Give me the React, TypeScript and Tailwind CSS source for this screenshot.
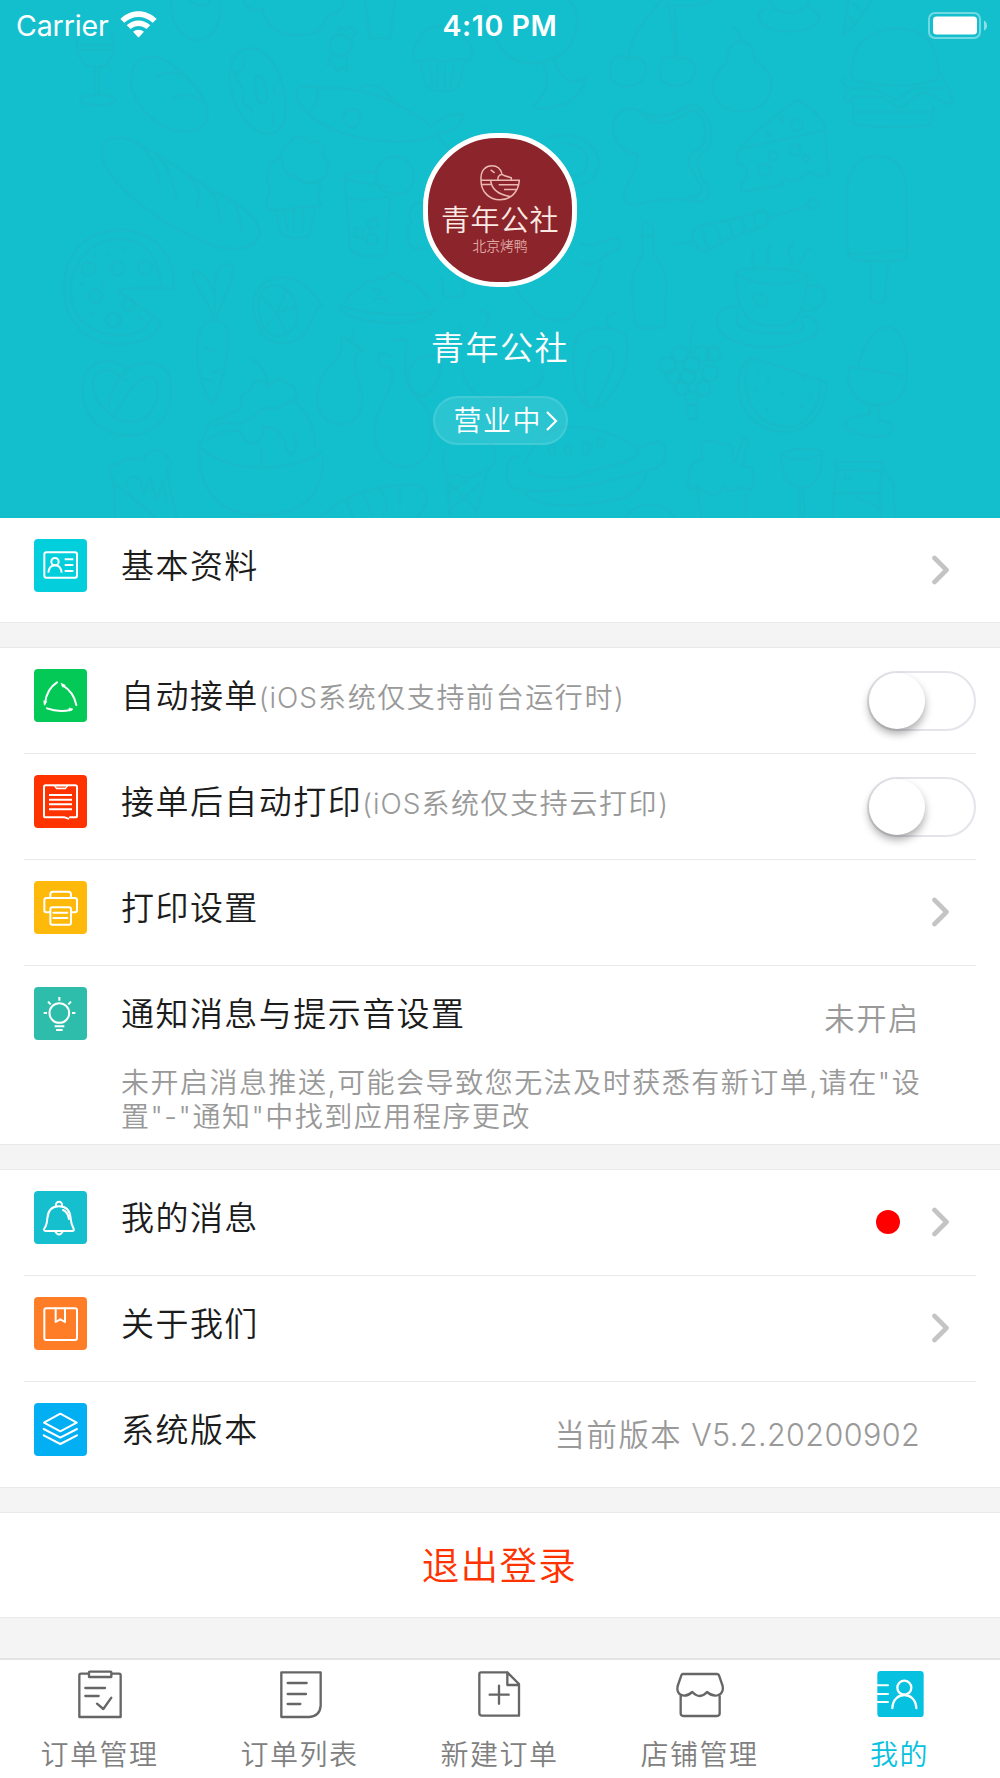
import type { ReactNode } from "react";

/* Faint food drawings behind the shop header */
function FoodPattern() {
  return (
    <svg
      className="absolute inset-0 h-full w-full"
      viewBox="0 0 3000 1554"
      preserveAspectRatio="none"
      fill="none"
      stroke="#1cb5c4"
      strokeOpacity="0.48"
      strokeWidth="8"
      strokeLinecap="round"
      strokeLinejoin="round"
    >
      {/* wine glass */}
      <path d="M232 105C222 160 245 202 287 202S350 160 336 100M232 135H336M240 150H330M285 204V285M297 204V285M240 300C240 280 345 280 345 300S240 322 240 300" />
      {/* bun */}
      <path d="M395 225C400 175 455 150 510 190C580 240 635 310 620 360C600 405 510 410 450 350C405 305 385 265 395 225ZM470 232C500 210 530 215 545 235M520 295C550 278 585 282 602 300" />
      {/* donut */}
      <path d="M690 210C700 145 760 125 805 170C850 220 875 340 840 385C810 420 750 395 715 330C695 290 685 250 690 210ZM765 245C765 220 790 225 797 255C805 290 800 315 785 310C765 300 765 270 765 245ZM738 165C725 185 740 205 715 215C690 240 740 250 730 290C720 330 760 310 755 340M820 345V375M818 260L825 280M700 215L705 230" />
      {/* top edge fragments */}
      <path d="M515 0C505 60 545 120 590 120S670 70 660 0M570 0C590 25 625 20 630 0M730 0C740 30 770 35 785 25C800 80 830 105 890 105S965 95 980 50C1020 40 1030 20 1030 0M1095 0L1110 115H1170L1185 0M1455 20C1470 90 1500 190 1590 190C1680 190 1740 130 1730 50C1725 20 1715 0 1700 0M1630 190C1650 240 1645 280 1600 315C1600 335 1640 325 1700 310C1735 285 1755 260 1755 235C1710 260 1680 230 1665 190" />
      {/* candy */}
      <path d="M990 135C990 105 1020 95 1045 115S1050 165 1020 168S990 155 990 135ZM1015 100L1020 80L1035 92L1050 78L1070 98L1052 115M1000 160L980 195L1000 192L1012 212L1028 202L1042 212L1040 165" />
      {/* cupcake */}
      <path d="M1242 172C1230 140 1260 130 1262 105C1285 70 1360 70 1385 105C1410 125 1425 150 1410 175M1245 180C1270 195 1290 170 1310 182C1335 195 1360 170 1408 180M1262 190L1275 255C1300 280 1360 275 1375 262L1392 190M1290 200L1298 255M1312 200V260M1335 200V262M1360 200L1352 258" />
      {/* fish */}
      <path d="M890 290C885 260 910 255 950 262C1080 262 1160 280 1295 378C1320 350 1360 340 1390 342C1385 380 1360 395 1310 400C1325 425 1340 440 1350 450M890 290C920 370 1050 425 1200 425C1250 425 1270 418 1300 408M950 264C960 290 945 320 932 330M1085 262C1110 245 1150 260 1180 300M1030 350C1040 320 1085 325 1082 340C1080 370 1065 390 1050 382C1035 370 1025 360 1030 350Z" />
      {/* baguette */}
      <path d="M305 450C310 405 370 400 430 440C500 475 600 550 640 575C700 600 780 650 780 700C770 750 690 765 600 720C480 670 300 540 305 450ZM425 440C460 470 465 500 480 545M475 470C510 500 520 560 530 600M565 530C600 560 600 590 590 625M625 570C660 600 650 630 662 665M700 605C720 630 715 660 725 690" />
      {/* ice cream cup */}
      <path d="M800 620C790 590 825 580 802 545C795 500 820 475 845 475C840 440 870 435 880 415C910 400 920 420 930 430C960 415 980 440 970 470C995 490 985 530 960 540C940 555 900 550 890 530C855 530 845 500 848 480M955 545C975 570 940 590 965 610C940 635 900 610 880 625C850 630 820 640 800 620M828 630L840 695C860 720 920 720 930 700L945 625M855 630L862 690M882 630V690M910 625V688" />
      {/* soft drink */}
      <path d="M1035 535C1060 550 1130 550 1160 560M1035 535C1040 515 1080 515 1130 515M1035 540L1050 745C1070 775 1150 775 1158 755L1170 600M1045 590C1080 605 1130 600 1165 590M1130 540C1120 500 1150 470 1185 470S1245 500 1240 540S1205 585 1175 580S1130 560 1130 540ZM1100 665L1130 655L1135 680L1110 690ZM1065 685L1090 690L1088 715L1065 710Z" />
      <circle cx="1115" cy="718" r="17" />
      {/* pizza */}
      <path d="M520 865C530 770 465 690 360 690S190 765 192 870S270 1035 360 1033S480 985 480 965L358 875C355 860 380 868 405 866L485 862C475 760 430 717 355 717S212 785 212 870S270 1000 345 1005S440 980 455 958M485 865H522" />
      <circle cx="265" cy="806" r="20" /><circle cx="353" cy="806" r="20" /><circle cx="435" cy="803" r="20" />
      <circle cx="287" cy="888" r="20" /><circle cx="340" cy="960" r="22" /><circle cx="385" cy="915" r="18" />
      <path d="M285 765V770M325 770L320 760M370 740V750M240 850L250 855M305 850L312 862M270 935L278 942M420 950L428 960" />
      {/* carrot */}
      <path d="M640 960C590 970 590 1020 592 1080C600 1140 615 1190 640 1210C660 1180 680 1080 685 1030C690 980 670 960 640 960ZM640 955C630 900 570 850 580 815C600 810 625 840 645 880M650 955C660 900 705 850 700 800C680 780 650 800 645 850V945M610 1040L640 1055M660 1110L635 1120M610 1135L640 1145" />
      {/* lemon */}
      <path d="M760 915C765 850 810 825 870 835C920 845 935 880 965 912C940 930 935 970 915 1000C880 1040 800 1040 780 990C765 960 760 940 760 915ZM775 920C775 860 810 850 840 860C880 870 895 920 890 960C880 1010 810 1030 785 975Z" />
      <path d="M830 940L785 890M830 940L860 870M830 940L880 920M830 940L860 1000M830 940L795 980" />
      {/* cake on a plate */}
      <path d="M1020 915C1010 940 1080 965 1160 968S1300 955 1305 925C1290 950 1100 950 1020 915ZM1038 905C1040 880 1080 870 1100 845C1120 850 1130 830 1155 835C1180 805 1200 830 1220 845C1250 840 1260 880 1290 895M1115 870C1130 860 1150 875 1135 885M1120 905C1140 880 1165 900 1160 912" />
      {/* pretzel */}
      <path d="M250 1190C235 1110 290 1080 330 1082C360 1090 375 1105 385 1105C420 1080 490 1080 508 1130C530 1230 480 1305 380 1307C300 1300 255 1250 250 1190ZM300 1210C260 1160 280 1110 320 1110C345 1110 360 1135 380 1140M325 1215C330 1170 375 1105 400 1100M345 1245C380 1180 420 1120 460 1130C490 1160 470 1260 400 1265C350 1270 320 1240 300 1210" />
      {/* eggplant, vase */}
      <path d="M1025 1010C1030 1060 1010 1080 980 1110C940 1160 940 1250 1000 1270C1060 1285 1095 1240 1085 1180C1075 1130 1055 1110 1070 1060C1090 1050 1100 1050 1095 1050C1060 1045 1050 1020 1060 995M1025 1010L1075 1040M1175 1025C1180 1015 1215 1015 1220 1025L1215 1090C1210 1140 1230 1180 1270 1215C1310 1260 1310 1400 1215 1400C1130 1400 1110 1300 1130 1250C1150 1200 1185 1150 1175 1105C1130 1100 1130 1080 1140 1055L1175 1070M1225 1120C1230 1080 1280 1060 1320 1070C1330 1130 1300 1180 1265 1190C1235 1180 1225 1150 1225 1120Z" />
      {/* sundae */}
      <path d="M598 1330C590 1450 640 1545 780 1545S970 1470 970 1375M605 1345C680 1420 880 1420 965 1355M600 1330C620 1310 610 1270 650 1260C680 1240 720 1240 725 1210C710 1180 760 1175 760 1150C780 1130 800 1150 805 1160C830 1125 850 1140 860 1150C900 1160 890 1190 880 1200C930 1240 945 1290 945 1340M805 1155C800 1120 780 1090 755 1078M650 1275C690 1250 700 1290 740 1260C780 1250 770 1220 810 1225C840 1230 850 1210 880 1200M620 1320C680 1280 690 1300 720 1290C740 1350 790 1340 790 1280C830 1280 850 1300 860 1350C880 1385 900 1340 880 1300M785 1345V1400" />
      {/* popcorn */}
      <path d="M345 1554L340 1440C320 1420 325 1390 360 1390C370 1370 400 1375 430 1380C440 1345 490 1340 500 1370C530 1390 500 1410 500 1415L530 1554M345 1450L470 1554M380 1460C380 1430 400 1420 420 1440L430 1480L450 1435L470 1500L490 1440L500 1510" />
      {/* bread roll and cone */}
      <path d="M960 1554C1030 1480 1150 1450 1250 1455C1300 1470 1280 1520 1250 1554M1040 1500L1060 1554M1090 1480L1115 1545M1140 1467C1165 1500 1165 1520 1150 1545M1200 1460V1520M1335 1350C1320 1400 1340 1450 1370 1425C1400 1445 1430 1425 1450 1415C1500 1400 1490 1350 1470 1330M1342 1440L1350 1554M1460 1420L1425 1554M1345 1480L1400 1440M1350 1530L1440 1450M1350 1450L1430 1530" />
      {/* small pieces round the avatar */}
      <path d="M1270 610C1230 600 1220 650 1235 665C1210 700 1220 760 1270 745M1325 830L1330 885C1340 895 1385 890 1392 885V850M1440 930C1480 940 1460 970 1455 980M1380 980C1375 1000 1400 1005 1405 1010M1385 1110C1400 1180 1460 1220 1520 1190C1600 1180 1640 1140 1625 1110" />
      <path d="M1650 410C1740 390 1800 440 1795 500C1785 550 1740 560 1720 555M1690 430C1750 430 1775 470 1755 510C1745 530 1720 530 1715 525M1740 730C1780 750 1820 710 1850 715C1870 730 1860 750 1820 760C1800 790 1770 800 1745 790M1800 800C1800 850 1740 920 1720 950C1680 970 1610 960 1600 930L1545 865" />
      {/* cherries */}
      <path d="M1830 200C1835 160 1870 165 1885 180C1905 160 1945 180 1938 220C1925 265 1850 275 1832 230ZM1980 205C1985 160 2020 165 2035 180C2055 165 2090 185 2085 220C2070 265 2000 270 1982 235ZM1885 170C1890 110 1940 50 1985 0M2030 172C2025 110 2010 50 2005 10M2025 172C2035 110 2025 30 2018 15C2060 20 2100 20 2135 0" />
      {/* pear */}
      <path d="M2220 125C2190 125 2182 160 2180 190C2145 215 2130 260 2145 290C2170 350 2270 345 2300 300C2335 240 2300 200 2265 185C2260 160 2265 125 2220 125ZM2222 122C2220 100 2210 90 2200 83" />
      {/* saucer, cone tip */}
      <path d="M2310 5C2320 50 2420 50 2425 0M2300 25C2260 30 2265 90 2365 95C2470 90 2480 40 2425 22M2545 0L2530 105C2570 70 2600 30 2615 0M2540 40L2560 70M2560 10L2590 40" />
      {/* burger */}
      <path d="M2555 230C2550 150 2590 90 2690 85C2790 85 2820 160 2815 235M2555 235C2620 265 2760 265 2815 235M2530 235C2520 260 2560 260 2540 280C2520 300 2540 320 2560 290L2640 290L2700 325L2760 280C2800 270 2830 320 2855 310C2860 290 2840 290 2855 275C2830 260 2850 250 2820 225M2560 310V370C2580 385 2770 380 2790 375L2802 320M2570 335H2790M2545 265H2620L2690 300L2740 265H2830" />
      {/* toast */}
      <path d="M1840 400C1830 340 1880 310 1925 335C1970 365 2030 340 2070 315C2130 320 2150 410 2120 450C2090 470 2080 480 2110 540C2140 570 2130 610 2090 605C2020 590 1960 600 1900 615C1860 610 1870 570 1890 540C1900 510 1920 490 1910 460C1870 460 1850 430 1840 400ZM1925 345C1985 390 2030 360 2075 330C2120 340 2125 400 2105 440C2050 470 2060 490 2095 545C2120 580 2090 595 2065 590" />
      {/* cheese */}
      <path d="M2210 460C2250 400 2350 330 2390 300C2440 320 2480 370 2475 395L2485 520C2470 540 2440 520 2435 515C2400 520 2410 550 2365 540C2350 530 2340 545 2350 555L2225 575L2222 550C2250 540 2250 500 2215 490ZM2225 445L2475 390" />
      <circle cx="2390" cy="375" r="18" /><circle cx="2385" cy="450" r="16" /><circle cx="2320" cy="467" r="13" /><circle cx="2293" cy="510" r="18" /><circle cx="2418" cy="475" r="10" /><circle cx="2345" cy="360" r="7" /><circle cx="2305" cy="403" r="7" />
      {/* skewer */}
      <path d="M2025 732C2060 725 2060 730 2080 725M2080 690C2110 660 2160 680 2290 630C2310 640 2305 670 2295 675C2240 700 2200 700 2120 755C2090 750 2070 720 2080 690ZM2105 685C2120 700 2105 720 2125 745M2140 675C2160 690 2150 710 2165 730M2180 665C2200 680 2190 700 2205 715M2220 655C2235 670 2235 690 2235 695M2260 645L2270 680M2305 655C2340 640 2390 630 2425 615" />
      <circle cx="2440" cy="612" r="15" />
      {/* popsicle */}
      <path d="M2542 740V560C2550 490 2590 468 2632 468S2710 490 2718 560L2722 770C2715 790 2560 790 2550 770ZM2550 760C2600 770 2680 750 2720 750M2613 785V895C2620 915 2650 915 2655 900L2663 785" />
      {/* bottle */}
      <path d="M1925 690C1925 660 1960 665 1960 690V755C1970 790 2000 800 1998 850L1995 975C1970 990 1920 990 1905 975L1895 850C1895 800 1925 790 1928 755ZM1928 708H1960" />
      {/* coffee */}
      <path d="M2210 815C2205 880 2220 930 2250 960C2290 985 2350 985 2385 960C2410 930 2420 880 2422 825M2210 815C2230 800 2390 800 2422 825C2400 860 2240 865 2210 815ZM2420 865C2440 845 2480 860 2472 895C2460 930 2430 935 2410 930M2215 920C2160 915 2140 950 2155 985C2200 1050 2340 1060 2440 1010C2470 980 2450 950 2410 950M2215 940C2190 990 2260 1000 2330 1000S2420 990 2405 965" />
      <path d="M2260 895C2260 870 2300 880 2302 905C2300 925 2265 920 2260 895ZM2255 755C2265 770 2250 780 2262 795M2310 735C2290 760 2315 770 2303 795M2380 728C2345 760 2385 770 2372 795M2430 745C2400 760 2415 780 2400 790" />
      {/* chilli */}
      <path d="M1830 985C1810 970 1820 940 1855 935M1740 1000C1780 975 1860 980 1880 1010C1890 1080 1870 1150 1810 1210C1780 1240 1740 1220 1725 1150C1715 1080 1720 1020 1740 1000ZM1765 1225C1745 1170 1750 1080 1790 1045C1840 1020 1850 1080 1835 1110C1820 1150 1790 1200 1785 1225" />
      {/* grapes */}
      <path d="M2073 1060V1015C2075 990 2080 970 2085 962M2062 1220V1250C2070 1260 2090 1260 2090 1250V1220" />
      <circle cx="2003" cy="1096" r="24" /><circle cx="2040" cy="1062" r="24" /><circle cx="2105" cy="1062" r="24" /><circle cx="2140" cy="1062" r="22" /><circle cx="2075" cy="1096" r="24" /><circle cx="2020" cy="1130" r="22" /><circle cx="2063" cy="1130" r="22" /><circle cx="2130" cy="1120" r="24" /><circle cx="2045" cy="1165" r="20" /><circle cx="2110" cy="1165" r="22" /><circle cx="2075" cy="1195" r="20" />
      {/* melon */}
      <path d="M2260 1075L2478 1145C2485 1200 2450 1290 2360 1295C2270 1300 2200 1220 2218 1130C2225 1095 2240 1075 2260 1075ZM2245 1080C2220 1150 2240 1280 2365 1280C2430 1280 2465 1200 2460 1150" />
      <path d="M2275 1115V1122M2303 1140L2306 1148M2268 1165L2265 1175M2345 1180H2350M2410 1125L2412 1135M2400 1210L2408 1222M2298 1222L2302 1230M2435 1185L2430 1195" />
      {/* egg cup */}
      <path d="M2575 1095C2590 1030 2630 980 2665 980C2710 990 2725 1050 2720 1130L2550 1100C2530 1160 2570 1210 2620 1215C2690 1220 2720 1180 2720 1130M2610 1215V1240C2590 1255 2540 1240 2535 1275C2550 1305 2630 1315 2660 1308C2690 1290 2680 1265 2640 1262L2632 1215" />
      {/* pie */}
      <path d="M1575 1390C1600 1320 1660 1280 1710 1280C1800 1285 1880 1310 1915 1355C1890 1400 1820 1390 1740 1425C1690 1445 1590 1430 1585 1410M1560 1370C1520 1360 1510 1420 1530 1460C1580 1485 1700 1470 1800 1450C1860 1430 1920 1420 1940 1410C2000 1410 2010 1340 1980 1325C1940 1330 1940 1335 1915 1345M1575 1480C1620 1530 1750 1520 1840 1500C1910 1490 1930 1450 1940 1415" />
      <ellipse cx="1657" cy="1350" rx="10" ry="18" /><ellipse cx="1705" cy="1350" rx="10" ry="18" /><ellipse cx="1758" cy="1345" rx="12" ry="18" /><ellipse cx="1802" cy="1328" rx="9" ry="15" /><path d="M1875 1554C1910 1500 1990 1500 2025 1554" />
      {/* shake, glass, carton */}
      <path d="M2105 1554L2090 1460C2060 1480 2060 1450 2070 1420C2060 1390 2100 1380 2110 1375C2095 1330 2110 1320 2130 1325C2150 1310 2150 1340 2180 1330C2210 1340 2190 1370 2205 1385L2230 1315L2245 1320L2225 1400C2260 1390 2265 1420 2260 1450C2265 1475 2240 1470 2235 1465C2210 1450 2200 1490 2170 1460C2150 1500 2120 1480 2095 1465M2238 1480V1554M2345 1365C2340 1430 2370 1460 2405 1462S2470 1430 2465 1355C2450 1345 2360 1340 2345 1365C2380 1385 2440 1380 2465 1360M2400 1465V1554M2412 1465V1554M2505 1385H2650V1410M2505 1385L2510 1410L2650 1412L2680 1450L2685 1554M2510 1412L2500 1490V1554M2505 1480H2640L2645 1554M2645 1415L2640 1480M2570 1490C2600 1520 2620 1500 2640 1530M2535 1425C2530 1450 2555 1440 2550 1430" />
    </svg>
  );
}

function MenuIcon({ bg, children }: { bg: string; children: ReactNode }) {
  return (
    <span className={`flex h-[53px] w-[53px] shrink-0 rounded-[4px] ${bg}`}>
      <svg
        className="h-full w-full"
        viewBox="0 0 159 159"
        fill="none"
        stroke="white"
        strokeWidth="6"
        strokeLinecap="round"
        strokeLinejoin="round"
      >
        {children}
      </svg>
    </span>
  );
}

function Chevron() {
  return (
    <svg
      className="mr-[26px] mb-[1px] h-[30px] w-[19px]"
      viewBox="0 0 19 30"
      fill="none"
      stroke="#c4c4c7"
      strokeWidth="4.6"
      strokeLinecap="round"
      strokeLinejoin="round"
    >
      <path d="M3.5 3L15.5 15L3.5 27" />
    </svg>
  );
}

function Toggle() {
  return (
    <span className="flex h-[60px] w-[109px] rounded-full border-2 border-[#e4e4ea] bg-white">
      <span className="h-14 w-14 rounded-full bg-white shadow-[0_5px_9px_rgba(0,0,0,0.33)]" />
    </span>
  );
}

type RowProps = {
  icon: ReactNode;
  title: string;
  hint?: ReactNode;
  note?: ReactNode;
  right?: ReactNode;
  size?: string;
  line?: boolean;
};

function Row({ icon, title, hint, note, right, size = "h-[106px]", line = true }: RowProps) {
  return (
    <div
      className={`mx-6 flex flex-col ${size} ${line ? "border-b border-[#e9e9e9]" : ""}`}
    >
      <div className="flex h-[105px] shrink-0 justify-between">
        <div className="mt-[21px] flex h-[53px] items-center pl-[10px]">
          {icon}
          <span className="ml-[34px] pt-[1px] text-[33px] leading-[50px] tracking-[1.45px] whitespace-nowrap text-[#1c1c1c]">
            {title}
          </span>
          {hint && (
            <span className="pt-[5px] text-[28px] leading-[48px] tracking-[1.6px] whitespace-nowrap text-[#999]">
              {hint}
            </span>
          )}
        </div>
        <div className="flex items-center">{right}</div>
      </div>
      {note}
    </div>
  );
}

function Gap() {
  return <div className="h-[26px] shrink-0 border-y border-[#e9e9e9] bg-[#f4f4f4]" />;
}

function Tab({ label, active, children }: { label: string; active?: boolean; children: ReactNode }) {
  return (
    <div className="flex w-[200px] flex-col items-center pt-[10px]">
      <svg
        className="h-[50px] w-[60px]"
        viewBox="0 0 180 150"
        fill="none"
        stroke="#666"
        strokeWidth="7"
        strokeLinecap="round"
        strokeLinejoin="round"
      >
        {children}
      </svg>
      <span
        className={`mt-[15px] pr-[1px] text-[28px] leading-[40px] tracking-[1.5px] ${
          active ? "text-[#06c1df]" : "text-[#808080]"
        }`}
      >
        {label}
      </span>
    </div>
  );
}

export default function App() {
  return (
    <div className="flex h-[1778px] w-[1000px] flex-col overflow-hidden bg-white font-[350] [font-family:Inter,'Noto_Sans_CJK_SC_DemiLight','Noto_Sans_CJK_SC',sans-serif]">
      <header className="relative h-[518px] shrink-0 overflow-hidden bg-[#14bfcd] text-white">
        <FoodPattern />
        <div className="relative flex flex-col items-center">
          <div className="grid h-[51px] w-full grid-cols-3 items-center pr-[13px] pl-4">
            <div className="flex items-center gap-[11px] pt-[1px] text-[28.5px] font-normal tracking-[-0.1px]">
              Carrier
              <svg className="mb-1 h-[27px] w-[37px]" viewBox="0 0 111 81" fill="white">
                <path d="M1 24C32-7 79-7 110 24L98 35C73 12 38 12 13 35Z" />
                <path d="M20 43C41 24 70 24 91 43L79 54C65 42 46 42 32 54Z" />
                <path d="M39 62C49 54 62 54 72 62L58 77Q55.500 80 53 77Z" />
              </svg>
            </div>
            <div className="pt-[1px] pr-[3px] text-center text-[28.500px] font-semibold tracking-[0.600px]">4:10 PM</div>
            <svg className="h-[28px] w-[60px] justify-self-end" viewBox="0 0 60 28">
              <rect x="2" y="1" width="51" height="25" rx="6" fill="none" stroke="white" strokeOpacity="0.4" strokeWidth="2" />
              <rect x="6" y="4.500" width="44" height="18" rx="3.500" fill="white" />
              <path d="M57 8.500Q60 10 60 13.500T57 18.500Z" fill="white" fillOpacity="0.5" />
            </svg>
          </div>

          <div className="mt-[82px] flex h-[154px] w-[154px] flex-col items-center rounded-[74px] border-[5px] border-white bg-[#8c242b] pt-[27px]">
            <svg
              className="h-9 w-10"
              viewBox="0 0 120 107"
              fill="none"
              stroke="#eab9b2"
              strokeWidth="4.500"
              strokeLinejoin="round"
            >
              <path d="M3 45V36C4 14 18 2 36 2C52 2 62 12 66 26M2 45H118C116 80 92 104 60 104S3 80 3 45M54 44C52 30 64 24 72 31L94 38V44M32 14L44 23M3 58H32M32 45C34 70 54 88 90 94M56 59H114M72 73H108" />
            </svg>
            <span className="mt-[3px] text-[29px] leading-[34px] tracking-[0.500px] whitespace-nowrap text-[#fbe9e3]">
              青年公社
            </span>
            <span className="-mt-[2px] text-[13.800px] leading-5 whitespace-nowrap text-[#e0aaa6]">北京烤鸭</span>
          </div>

          <div className="mt-[37px] text-[33px] leading-[48px] tracking-[1.450px]">青年公社</div>

          <div className="mt-[24px] flex h-[49px] w-[135px] items-center rounded-full border-2 border-white/10 bg-white/10 pl-[19px]">
            <span className="text-[28px] leading-10 tracking-[1.500px] whitespace-nowrap">营业中</span>
            <svg className="ml-[4px] h-5 w-3 shrink-0" viewBox="0 0 12 20" fill="none" stroke="white" strokeWidth="2.200">
              <path d="M1 1L10 10L1 19" />
            </svg>
          </div>
        </div>
      </header>

      <Row
        size="h-[104px]"
        line={false}
        title="基本资料"
        right={<Chevron />}
        icon={
          <MenuIcon bg="bg-[#03cfdc]">
            <rect x="31" y="40" width="98" height="76" rx="6" />
            <circle cx="63" cy="68" r="11" />
            <path d="M43 101C45 85 52 79 63 79S81 85 83 101M92 61H118M92 78H118M92 96H118" strokeLinecap="butt" />
          </MenuIcon>
        }
      />
      <Gap />
      <Row
        title="自动接单"
        hint={<><span className="tracking-[1px]">(iOS</span>系统仅支持前台运行时)</>}
        right={<Toggle />}
        icon={
          <MenuIcon bg="bg-[#04c957]">
            <path d="M69 40C50 52 36 76 33 103M86 49C108 62 122 82 127 108M39 118Q74 131 112 122" />
            <path d="M30 96L38 98L32 108ZM82 43L94 49L87 54ZM116 120L105 117L106 125Z" fill="white" strokeWidth="2" />
          </MenuIcon>
        }
      />
      <Row
        title="接单后自动打印"
        hint={<><span className="tracking-[1px]">(iOS</span>系统仅支持云打印)</>}
        right={<Toggle />}
        icon={
          <MenuIcon bg="bg-[#ff3300]">
            <path d="M108 127H124Q129 127 129 122V36Q129 31 124 31H35Q30 31 30 36V122Q30 127 35 127H92L103 131" />
            <path d="M61 32L68 41H94L101 32" strokeWidth="4" />
            <path d="M66 36H97" strokeWidth="5" strokeOpacity="0.5" />
            <path d="M45 60H114M45 74H114M45 88H114M45 103H114" strokeLinecap="butt" />
          </MenuIcon>
        }
      />
      <Row
        title="打印设置"
        right={<Chevron />}
        icon={
          <MenuIcon bg="bg-[#ffb90a]">
            <path d="M49 51V40Q49 32 57 32H103Q111 32 111 40V51M48 94H37Q31 94 31 88V58Q31 51 38 51H122Q129 51 129 58V88Q129 94 123 94H112" />
            <rect x="49" y="79" width="62" height="52" rx="6" />
            <path d="M58 95H100M58 111H100" />
          </MenuIcon>
        }
      />
      <Row
        size="h-[178px]"
        line={false}
        title="通知消息与提示音设置"
        right={
          <span className="mr-[56px] pt-[3px] text-[30.300px] tracking-[1.600px] text-[#999]">未开启</span>
        }
        note={
          <p className="-mt-[4px] ml-[97px] text-[28px] leading-[33.700px] tracking-[1.520px] whitespace-nowrap text-[#999]">
            未开启消息推送,可能会导致您无法及时获悉有新订单,请在"设
            <br />
            置"-"通知"中找到应用程序更改
          </p>
        }
        icon={
          <MenuIcon bg="bg-[#2fbdab]">
            <circle cx="76" cy="78" r="29.500" />
            <path
              d="M76 30V41M29 78H39M114 78H124M42 44L50 52M111 44L103 52M62 118H91M66 129H86"
              strokeLinecap="butt"
            />
          </MenuIcon>
        }
      />
      <Gap />
      <Row
        title="我的消息"
        right={
          <>
            <span className="mr-[31px] mb-[1px] h-6 w-6 rounded-full bg-[#ff0000]" />
            <Chevron />
          </>
        }
        icon={
          <MenuIcon bg="bg-[#15bfce]">
            <path d="M35 120C28 120 29 114 33 109C38 102 39 95 40 82C42 58 54 46 75 46S108 58 110 82C111 95 113 102 118 111C121 117 120 120 114 120Z" />
            <path d="M66 46C62 28 88 28 84 46M63 121Q75 140 87 121" />
            <path d="M87 57C98 62 103 71 105 84" />
          </MenuIcon>
        }
      />
      <Row
        title="关于我们"
        right={<Chevron />}
        icon={
          <MenuIcon bg="bg-[#ff7d27]">
            <rect x="31" y="34" width="98" height="95" rx="6" />
            <path d="M65 34V75L79 67L93 75V34" />
          </MenuIcon>
        }
      />
      <Row
        size="h-[105px]"
        line={false}
        title="系统版本"
        right={
          <span className="mr-[56px] pt-[1px] text-[30.300px] tracking-[1.600px] text-[#999]">
            当前版本<span className="pl-[9px] text-[30.500px] tracking-[0.400px]">V5.2.20200902</span>
          </span>
        }
        icon={
          <MenuIcon bg="bg-[#03aff3]">
            <path d="M79 32L128 59L79 85L30 59Z" />
            <path d="M29 78L79 104L129 78M29 97L79 123L129 97" />
          </MenuIcon>
        }
      />
      <Gap />
      <button className="h-[104px] shrink-0 pt-[1px] pr-[1px] text-[37.600px] leading-[56px] font-[350] tracking-[1.300px] text-[#ff3300]">
        退出登录
      </button>
      <div className="h-[41px] shrink-0 border-t border-[#e9e9e9] bg-[#f4f4f4]" />

      <nav className="flex flex-1 border-t-2 border-[#e4e4e4]">
        <Tab label="订单管理">
          <path d="M57 11H33Q28 11 28 16V141H152V16Q152 11 147 11H124M57 7Q57 5 59 5H122Q124 5 124 7V21H57ZM46 54H105M46 78H86M81 101L100 117L124 83" />
        </Tab>
        <Tab label="订单列表">
          <path d="M34 7H152V107Q150 138 118 141H34ZM53 39H110M53 72H108M53 102H91" />
        </Tab>
        <Tab label="新建订单">
          <path d="M109 7H33Q28 7 28 12V129Q28 137 36 137H147V42L112 7V45H147M87 47V101M59 74H116" />
        </Tab>
        <Tab label="店铺管理">
          <path d="M38 12H141Q145 12 147 16L158 48C163 76 135 86 111 66Q90 90 67 66C44 86 17 76 23 48L34 16Q36 12 38 12ZM32 78V130Q32 138 40 138H141Q149 138 149 130V78" />
        </Tab>
        <Tab label="我的" active>
          <rect x="22" y="3" width="139" height="138" rx="10" fill="#06c1df" stroke="none" />
          <path d="M18 46H54M18 72H54M18 96H54" stroke="white" strokeWidth="6" />
          <circle cx="103" cy="53" r="21" stroke="white" />
          <path d="M67 114C70 62 136 62 139 114" stroke="white" />
        </Tab>
      </nav>
    </div>
  );
}
